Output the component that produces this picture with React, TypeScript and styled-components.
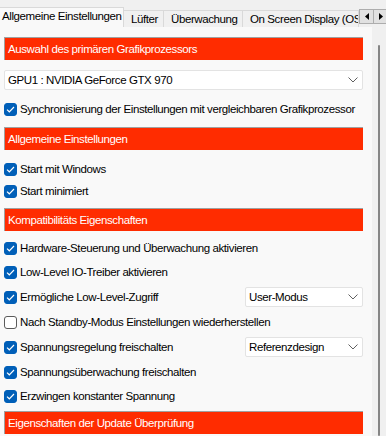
import styled, { createGlobalStyle } from "styled-components";

const GlobalStyle = createGlobalStyle`
  html, body {
    margin: 0;
    padding: 0;
    background: #f0f0f0;
  }
  * {
    box-sizing: border-box;
  }
`;

const tabs = [
  { label: "Allgemeine Einstellungen", width: 124 },
  { label: "Lüfter", width: 41 },
  { label: "Überwachung", width: 80 },
  { label: "On Screen Display (OSD)", width: 117 },
];

const Chevron = () => (
  <svg width="10" height="6" viewBox="0 0 10 6">
    <path d="M0.5 0.5 L5 5 L9.5 0.5" fill="none" stroke="#606060" strokeWidth="1" />
  </svg>
);

const Check = ({ checked }: { checked: boolean }) => (
  <CheckBox checked={checked}>
    {checked && (
      <svg width="9" height="7" viewBox="0 0 9 7">
        <path d="M1 3.6 L3.3 5.8 L8 1" fill="none" stroke="#fff" strokeWidth="1.2" />
      </svg>
    )}
  </CheckBox>
);

const Option = ({
  label,
  checked = true,
  select,
  size = 24,
}: {
  label: string;
  checked?: boolean;
  select?: string;
  size?: number;
}) => (
  <CheckRow size={select ? 26 : size}>
    <Check checked={checked} />
    <Label>{label}</Label>
    {select && (
      <SmallSelect>
        <span>{select}</span>
        <Chevron />
      </SmallSelect>
    )}
  </CheckRow>
);

const App = () => {
  return (
    <Window>
      <GlobalStyle />
      <TabBar>
        {tabs.map((t, i) => (
          <Tab key={t.label} active={i === 0} width={t.width}>
            {t.label}
          </Tab>
        ))}
        <Arrows>
          <ArrowBtn>
            <svg width="4" height="7" viewBox="0 0 4 7">
              <path d="M4 0 L0 3.5 L4 7 Z" fill="#000" />
            </svg>
          </ArrowBtn>
          <ArrowBtn>
            <svg width="4" height="7" viewBox="0 0 4 7">
              <path d="M0 0 L4 3.5 L0 7 Z" fill="#000" />
            </svg>
          </ArrowBtn>
        </Arrows>
      </TabBar>
      <Body>
        <Panel>
          <Header>Auswahl des primären Grafikprozessors</Header>
          <BigSelect>
            <span>GPU1 : NVIDIA GeForce GTX 970</span>
            <Chevron />
          </BigSelect>
          <Group top={8} bottom={7}>
            <Option size={22} label="Synchronisierung der Einstellungen mit vergleichbaren Grafikprozessor" />
          </Group>
          <Header>Allgemeine Einstellungen</Header>
          <Group top={8} bottom={6}>
            <Option size={22} label="Start mit Windows" />
            <Option size={22} label="Start minimiert" />
          </Group>
          <Header>Kompatibilitäts Eigenschaften</Header>
          <Group top={5} bottom={3}>
            <Option label="Hardware-Steuerung und Überwachung aktivieren" />
            <Option label="Low-Level IO-Treiber aktivieren" />
            <Option label="Ermögliche Low-Level-Zugriff" select="User-Modus" />
            <Option label="Nach Standby-Modus Einstellungen wiederherstellen" checked={false} />
            <Option label="Spannungsregelung freischalten" select="Referenzdesign" />
            <Option label="Spannungsüberwachung freischalten" />
            <Option label="Erzwingen konstanter Spannung" />
          </Group>
          <Header>Eigenschaften der Update Überprüfung</Header>
        </Panel>
        <ScrollTrack>
          <Thumb />
        </ScrollTrack>
      </Body>
    </Window>
  );
};

export default App;

const Window = styled.div`
  width: 386px;
  height: 436px;
  overflow: hidden;
  background: #f0f0f0;
  font-family: "Liberation Sans", Arial, sans-serif;
  font-size: 11.5px;
  letter-spacing: -0.4px;
  color: #000;
  display: flex;
  flex-direction: column;
`;

const TabBar = styled.div`
  height: 27px;
  display: flex;
  align-items: flex-end;
  position: relative;
  flex-shrink: 0;
`;

const Tab = styled.div<{ active?: boolean; width: number }>`
  width: ${(p) => p.width}px;
  flex-shrink: 0;
  height: ${(p) => (p.active ? 20 : 17)}px;
  padding: ${(p) => (p.active ? "0 0 3px 2px" : "0 0 0 7px")};
  display: flex;
  align-items: center;
  white-space: nowrap;
  background: ${(p) => (p.active ? "#f9f9f9" : "#f0f0f0")};
  border: 1px solid #d9d9d9;
  border-bottom: none;
  border-left: ${(p) => (p.active ? "none" : "1px solid #d9d9d9")};
  margin-left: ${(p) => (p.active ? 0 : -1)}px;
  overflow: hidden;
`;

const Arrows = styled.div`
  position: absolute;
  left: 359px;
  top: 9px;
  display: flex;
`;

const ArrowBtn = styled.div`
  width: 15px;
  height: 15px;
  background: #e1e1e1;
  border: 1px solid #adadad;
  margin-right: -1px;
  display: flex;
  align-items: center;
  justify-content: center;
`;

const Body = styled.div`
  flex: 1;
  display: flex;
`;

const Panel = styled.div`
  width: 372px;
  background: #f9f9f9;
  padding: 10px 9px 0 4px;
  display: flex;
  flex-direction: column;
`;

const Header = styled.div`
  height: 23px;
  flex-shrink: 0;
  background: #ff2c00;
  border-top: 1px solid #a0a0a0;
  border-left: 1px solid #a0a0a0;
  color: #fff;
  padding-left: 3px;
  display: flex;
  align-items: center;
  white-space: nowrap;
`;

const BigSelect = styled.div`
  margin-top: 10px;
  height: 20px;
  background: #fff;
  border: 1px solid #e3e3e3;
  border-radius: 2px;
  display: flex;
  align-items: center;
  justify-content: space-between;
  padding: 0 4px 0 3px;
`;

const Group = styled.div<{ top: number; bottom: number }>`
  margin: ${(p) => p.top}px 0 ${(p) => p.bottom}px;
  display: flex;
  flex-direction: column;
`;

const CheckRow = styled.div<{ size: number }>`
  height: ${(p) => p.size}px;
  display: flex;
  align-items: center;
`;

const CheckBox = styled.div<{ checked: boolean }>`
  width: 13px;
  height: 13px;
  border-radius: 3px;
  flex-shrink: 0;
  display: flex;
  align-items: center;
  justify-content: center;
  background: ${(p) => (p.checked ? "#005fb8" : "#fff")};
  border: 1px solid ${(p) => (p.checked ? "#005fb8" : "#5a5a5a")};
`;

const Label = styled.span`
  margin-left: 3px;
  white-space: nowrap;
  flex: 1;
`;

const SmallSelect = styled.div`
  width: 118px;
  height: 20px;
  background: #fff;
  border: 1px solid #e3e3e3;
  border-radius: 2px;
  display: flex;
  align-items: center;
  justify-content: space-between;
  padding: 0 4px 0 3px;
`;

const ScrollTrack = styled.div`
  width: 14px;
  background: #f0f0f0;
  display: flex;
  justify-content: center;
  padding-top: 18px;
`;

const Thumb = styled.div`
  width: 2px;
  height: 100%;
  background: #858585;
  border-radius: 1px;
`;
